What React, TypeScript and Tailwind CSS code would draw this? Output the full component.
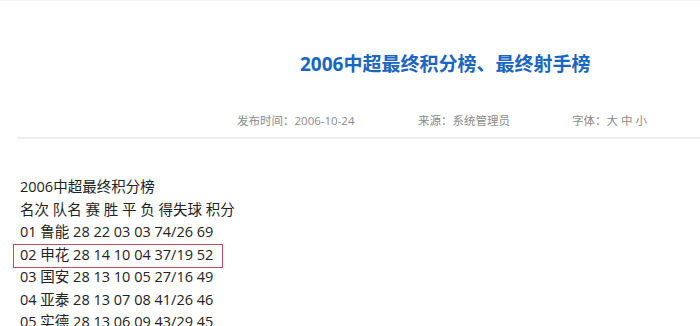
import React from 'react';

const rows = [
  '名次 队名 赛 胜 平 负 得失球 积分',
  '01 鲁能 28 22 03 03 74/26 69',
  '02 申花 28 14 10 04 37/19 52',
  '03 国安 28 13 10 05 27/16 49',
  '04 亚泰 28 13 07 08 41/26 46',
  '05 实德 28 13 06 09 43/29 45',
];

export default function App() {
  return (
    <div
      className="h-[326px] w-[700px] overflow-hidden bg-white border-t border-[#f3f3f3]"
      style={{ fontFamily: '"Open Sans", "Noto Sans CJK SC", sans-serif' }}
    >
      {/* Title */}
      <div className="pt-[49px] pl-[300px]">
        <h1 className="text-[19px] leading-[28px] font-bold text-[#1766c2] whitespace-nowrap">
          2006中超最终积分榜、最终射手榜
        </h1>
      </div>

      {/* Meta */}
      <div className="mt-[34px] ml-[17px] border-b-2 border-[#eeeeee] pb-[7px]">
        <div className="flex text-[11.5px] leading-[18px] text-[#8a8a8a] whitespace-nowrap pl-[220px]">
          <span className="w-[181px]">发布时间：2006-10-24</span>
          <span className="w-[154px]">来源：系统管理员</span>
          <span>字体：大 中 小</span>
        </div>
      </div>

      {/* Content */}
      <div className="mt-[37px] pl-[20px] text-[14.5px] leading-[22.5px] text-[#222222] whitespace-nowrap">
        <div>2006中超最终积分榜</div>
        {rows.map((row, i) => (
          <div key={i} className="relative">
            {row}
            {i === 2 && (
              <span className="absolute left-[-7px] top-0 h-[24px] w-[210px] border border-[#c0505a]" />
            )}
          </div>
        ))}
      </div>
    </div>
  );
}
